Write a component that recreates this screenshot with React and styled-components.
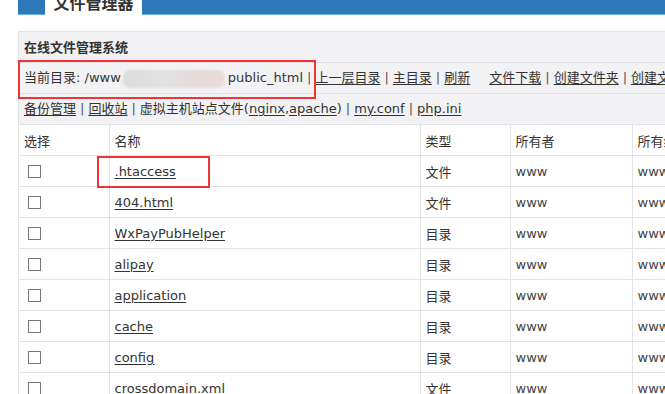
import React from 'react';
import styled, { createGlobalStyle } from 'styled-components';

const GlobalStyle = createGlobalStyle`
  html, body {
    margin: 0;
    padding: 0;
    background: #fff;
    overflow: hidden;
  }
  body {
    font-family: "DejaVu Sans", "Noto Sans CJK SC", sans-serif;
    font-size: 13px;
    color: #333;
  }
`;

const Page = styled.div`
  width: 665px;
  height: 394px;
  overflow: hidden;
  padding-left: 18px;
  box-sizing: border-box;
`;

const TopBar = styled.div`
  height: 14px;
  background: #2f77b6;
  border-bottom: 1px solid #63b2e2;
  padding-left: 27px;
  display: flex;
  width: 760px;
`;

const Tab = styled.div`
  width: 97px;
  height: 15px;
  background: #fff;
  overflow: hidden;
  display: flex;
  justify-content: center;
`;

const TabTitle = styled.div`
  font-family: "Noto Sans CJK SC", sans-serif;
  font-size: 16px;
  font-weight: bold;
  line-height: 16px;
  margin-top: -6px;
  color: #333;
`;

const Panel = styled.div`
  margin-top: 16px;
  width: 760px;
  border: 1px solid #e3e3e6;
  background: #f2f2f4;
`;

const PanelTitle = styled.div`
  height: 30px;
  line-height: 30px;
  padding-left: 5px;
  font-family: "Noto Sans CJK SC", sans-serif;
  font-weight: bold;
  font-size: 13px;
  border-bottom: 1px solid #e3e3e6;
`;

const ToolRow = styled.div`
  height: 30px;
  line-height: 30px;
  padding-left: 5px;
  white-space: nowrap;
  border-bottom: 1px solid #e3e3e6;
`;

const Link = styled.a`
  color: #333;
  text-decoration: underline;
  text-underline-offset: 2px;
  cursor: pointer;
`;

const Sep = styled.span`
  color: #555;
  padding: 0 4px;
`;

const Gap = styled.span`
  display: inline-block;
  width: ${p => p.w}px;
`;

const Mark = styled.span`
  position: relative;
  display: inline-block;
  &::after {
    content: '';
    position: absolute;
    left: ${p => p.l}px;
    right: ${p => p.r}px;
    top: ${p => p.t}px;
    bottom: ${p => p.b}px;
    border: 2px solid #ee3535;
    pointer-events: none;
  }
`;

const Blur = styled.span`
  display: inline-block;
  width: 102px;
  height: 18px;
  vertical-align: middle;
  margin: 0 3px 0 2px;
  background: linear-gradient(90deg, #dcdcdc 0%, #e2e2e2 40%, #e6dada 75%, #ecdcdc 100%);
  filter: blur(1px);
  border-radius: 7px;
`;

const Table = styled.table`
  border-collapse: collapse;
  table-layout: fixed;
  width: 760px;
  background: #fff;
`;

const Cell = styled.td`
  height: 30px;
  padding: 0 0 0 5px;
  border-top: 1px solid #e3e3e6;
  border-left: 1px solid #e3e3e6;
  white-space: nowrap;
  vertical-align: middle;
  font-family: ${p => (p.cjk ? '"Noto Sans CJK SC", sans-serif' : 'inherit')};
  &:first-child {
    border-left: none;
  }
`;

const Head = styled(Cell).attrs({ as: 'th' })`
  text-align: left;
  font-weight: normal;
  font-family: "Noto Sans CJK SC", sans-serif;
  border-top: none;
`;

const CheckBox = styled.span`
  display: block;
  width: 11px;
  height: 11px;
  margin-left: 4px;
  border: 1px solid #777;
  background: #fff;
`;

const Owner = styled.span`
  color: #444;
`;

const files = [
  { name: '.htaccess', type: '文件', mark: true },
  { name: '404.html', type: '文件' },
  { name: 'WxPayPubHelper', type: '目录' },
  { name: 'alipay', type: '目录' },
  { name: 'application', type: '目录' },
  { name: 'cache', type: '目录' },
  { name: 'config', type: '目录' },
  { name: 'crossdomain.xml', type: '文件' },
];

export default function App() {
  return (
    <Page>
      <GlobalStyle />
      <TopBar>
        <Tab>
          <TabTitle>文件管理器</TabTitle>
        </Tab>
      </TopBar>
      <Panel>
        <PanelTitle>在线文件管理系统</PanelTitle>
        <ToolRow>
          <Mark l={-6} r={-1} t={-3} b={-6}>
            当前目录: /www<Blur />public_html<Sep>|</Sep>
          </Mark>
          <Link>上一层目录</Link>
          <Sep>|</Sep>
          <Link>主目录</Link>
          <Sep>|</Sep>
          <Link>刷新</Link>
          <Gap w={19} />
          <Link>文件下载</Link>
          <Sep>|</Sep>
          <Link>创建文件夹</Link>
          <Sep>|</Sep>
          <Link>创建文件</Link>
        </ToolRow>
        <ToolRow>
          <Link>备份管理</Link>
          <Sep>|</Sep>
          <Link>回收站</Link>
          <Sep>|</Sep>
          虚拟主机站点文件(<Link>nginx</Link>,<Link>apache</Link>)
          <Sep>|</Sep>
          <Link>my.conf</Link>
          <Sep>|</Sep>
          <Link>php.ini</Link>
        </ToolRow>
        <Table>
          <colgroup>
            <col style={{ width: 90 }} />
            <col style={{ width: 311 }} />
            <col style={{ width: 90 }} />
            <col style={{ width: 122 }} />
            <col />
          </colgroup>
          <thead>
            <tr>
              <Head>选择</Head>
              <Head>名称</Head>
              <Head>类型</Head>
              <Head>所有者</Head>
              <Head>所有组</Head>
            </tr>
          </thead>
          <tbody>
            {files.map(f => (
              <tr key={f.name}>
                <Cell>
                  <CheckBox />
                </Cell>
                <Cell>
                  {f.mark ? (
                    <Mark l={-18} r={-34} t={-8} b={-9}>
                      <Link>{f.name}</Link>
                    </Mark>
                  ) : (
                    <Link>{f.name}</Link>
                  )}
                </Cell>
                <Cell cjk>{f.type}</Cell>
                <Cell>
                  <Owner>www</Owner>
                </Cell>
                <Cell>
                  <Owner>www</Owner>
                </Cell>
              </tr>
            ))}
          </tbody>
        </Table>
      </Panel>
    </Page>
  );
}
